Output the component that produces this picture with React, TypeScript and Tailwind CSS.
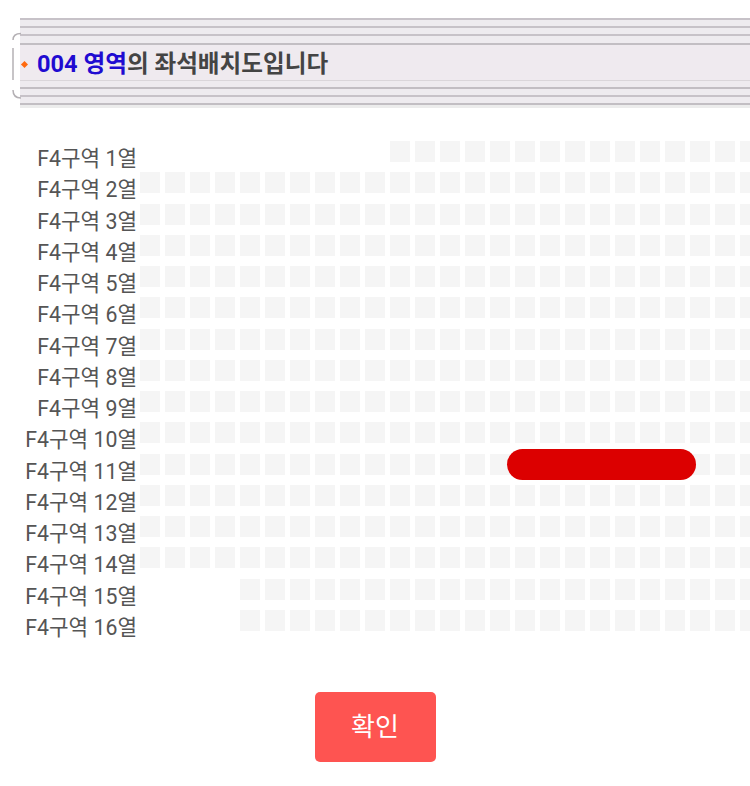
import React from 'react';

// seat map rows: offset = number of empty slots before first seat
const rows = Array.from({ length: 16 }, (_, i) => {
  const n = i + 1;
  let offset = 0;
  if (n === 1) offset = 10;
  if (n >= 15) offset = 4;
  return { label: `F4구역 ${n}열`, offset };
});

const COLS = 25;

const TopStripes = () => (
  <div className="flex flex-col">
    <div className="h-[2px] bg-[#c7c2c8]" />
    <div className="h-[6px] bg-[#eeebef]" />
    <div className="h-[2px] bg-[#c7c2c8]" />
    <div className="h-[6px] bg-[#eeebef]" />
    <div className="h-[2px] bg-[#c7c2c8]" />
    <div className="h-[7px] bg-[#eeebef]" />
    <div className="h-[2px] bg-[#c2bec3]" />
  </div>
);

const BottomStripes = () => (
  <div className="flex flex-col">
    <div className="h-[6px] bg-[#eeebef]" />
    <div className="h-[2px] bg-[#c2bec3]" />
    <div className="h-[6px] bg-[#eeebef]" />
    <div className="h-[2px] bg-[#c7c2c8]" />
    <div className="h-[6px] bg-[#eeebef]" />
    <div className="h-[2px] bg-[#c2bec3]" />
    <div className="h-[3px] bg-[#ececec]" />
  </div>
);

export default function App() {
  return (
    <div
      className="w-[750px] h-[786px] bg-white overflow-hidden"
      style={{ fontFamily: "Roboto, 'Noto Sans CJK KR', sans-serif" }}
    >
      {/* Header */}
      <div className="relative pt-[18px]">
        <div className="ml-[20px]">
          <TopStripes />
          <div className="h-[35px] bg-[#efeaef] flex items-center">
            <span className="ml-[2px] mt-[3px] w-[5px] h-[5px] bg-[#ff6a10] rotate-45" />
            <span className="ml-[10px] text-[23.6px] font-bold text-[#444444] pt-[5px]">
              <span className="text-[#1f0bd1]">004 영역</span>의 좌석배치도입니다
            </span>
          </div>
          <div className="h-[1px] bg-[#dad6da]" />
          <BottomStripes />
        </div>
        <svg
          className="absolute left-[10px] top-[32px]"
          width="12"
          height="70"
          viewBox="0 0 12 70"
          fill="none"
          stroke="#b4b0b4"
          strokeWidth="1.5"
        >
          <path d="M11 1.5 Q3 1.5 3 8" />
          <path d="M3 16 L3 48" />
          <path d="M3 58 Q3 66 11 66" />
        </svg>
      </div>

      {/* Seat map */}
      <div className="relative mt-[33px]">
        {rows.map((row) => (
          <div key={row.label} className="flex h-[31.27px]">
            <div className="w-[137px] shrink-0 text-right text-[21.3px] leading-[31px] pt-[2px] text-[#555555] whitespace-nowrap">
              {row.label}
            </div>
            <div className="ml-[3px] flex gap-[5px]">
              {Array.from({ length: COLS }, (_, c) => (
                <div
                  key={c}
                  className={
                    c < row.offset
                      ? 'w-[20px] h-[21px] shrink-0'
                      : 'w-[20px] h-[21px] shrink-0 bg-[#f5f5f5]'
                  }
                />
              ))}
            </div>
          </div>
        ))}
        {/* redaction mark */}
        <div className="absolute left-[507px] top-[308px] w-[189px] h-[31px] rounded-full bg-[#dc0000]" />
      </div>

      {/* Confirm */}
      <div className="flex justify-center mt-[51px]">
        <button className="w-[121px] h-[70px] rounded-[5px] bg-[#fe5451] text-white text-[26px]">
          확인
        </button>
      </div>
    </div>
  );
}
